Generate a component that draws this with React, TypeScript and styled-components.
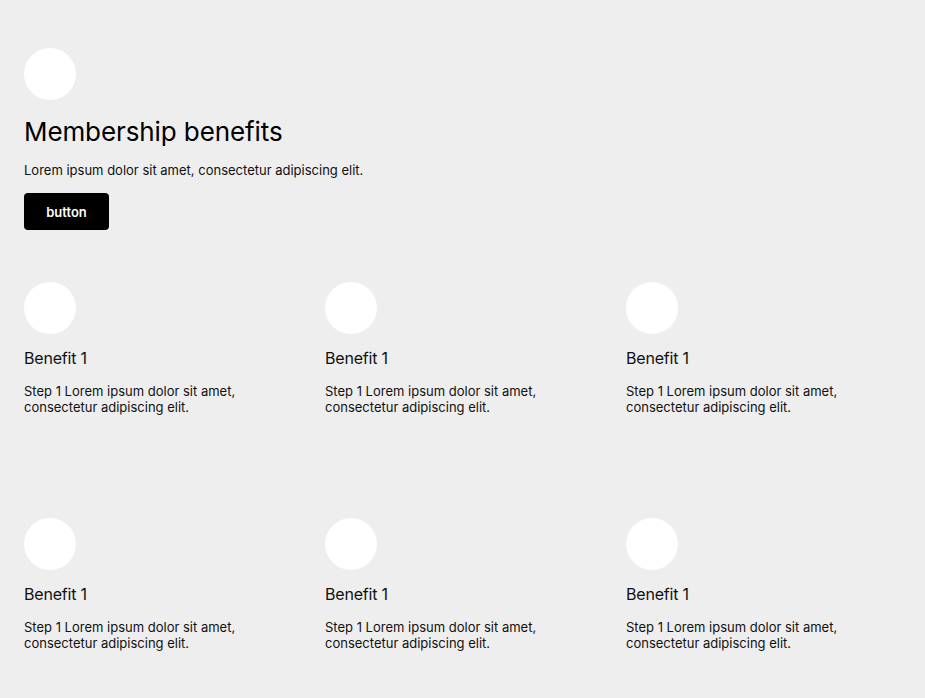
import React from "react";
import styled, { createGlobalStyle } from "styled-components";

const GlobalStyle = createGlobalStyle`
  html, body {
    margin: 0;
    padding: 0;
    background: #eeeeee;
  }
  body {
    font-family: Inter, "Noto Sans", "Liberation Sans", sans-serif;
    color: #000000;
  }
  * { box-sizing: border-box; }
`;

const Page = styled.main`
  padding: 48px 24px 40px 24px;
  display: flex;
  flex-direction: column;
`;

const Header = styled.section`
  display: flex;
  flex-direction: column;
  align-items: flex-start;
`;

const Avatar = styled.div`
  width: 52px;
  height: 52px;
  border-radius: 50%;
  background: #ffffff;
  flex: none;
`;

const Title = styled.h1`
  margin: 16px 0 0 0;
  font-size: 26px;
  line-height: 31px;
  font-weight: 400;
  letter-spacing: -0.1px;
`;

const Lead = styled.p`
  margin: 13px 0 0 0;
  font-size: 13px;
  line-height: 20px;
  color: #111111;
`;

const Button = styled.button`
  margin-top: 13px;
  width: 85px;
  height: 37px;
  border: none;
  border-radius: 4px;
  background: #000000;
  color: #ffffff;
  font-family: Inter, "Noto Sans", sans-serif;
  font-weight: 600;
  font-size: 13px;
  cursor: pointer;
`;

const Grid = styled.section`
  margin-top: 52px;
  display: grid;
  grid-template-columns: repeat(3, 275px);
  column-gap: 26px;
  row-gap: 103px;
`;

const Card = styled.article`
  display: flex;
  flex-direction: column;
  align-items: flex-start;
`;

const CardTitle = styled.h3`
  margin: 12px 0 0 0;
  font-size: 16px;
  line-height: 24px;
  font-weight: 400;
  letter-spacing: -0.2px;
  color: #111111;
`;

const CardText = styled.p`
  margin: 13px 0 0 0;
  font-size: 13px;
  line-height: 16px;
  color: #111111;
`;

const benefits = Array.from({ length: 6 }, (_, i) => ({
  id: i,
  title: "Benefit 1",
  text: "Step 1 Lorem ipsum dolor sit amet, consectetur adipiscing elit.",
}));

export default function App() {
  return (
    <>
      <GlobalStyle />
      <Page>
        <Header>
          <Avatar />
          <Title>Membership benefits</Title>
          <Lead>Lorem ipsum dolor sit amet, consectetur adipiscing elit.</Lead>
          <Button>button</Button>
        </Header>
        <Grid>
          {benefits.map((b) => (
            <Card key={b.id}>
              <Avatar />
              <CardTitle>{b.title}</CardTitle>
              <CardText>{b.text}</CardText>
            </Card>
          ))}
        </Grid>
      </Page>
    </>
  );
}
